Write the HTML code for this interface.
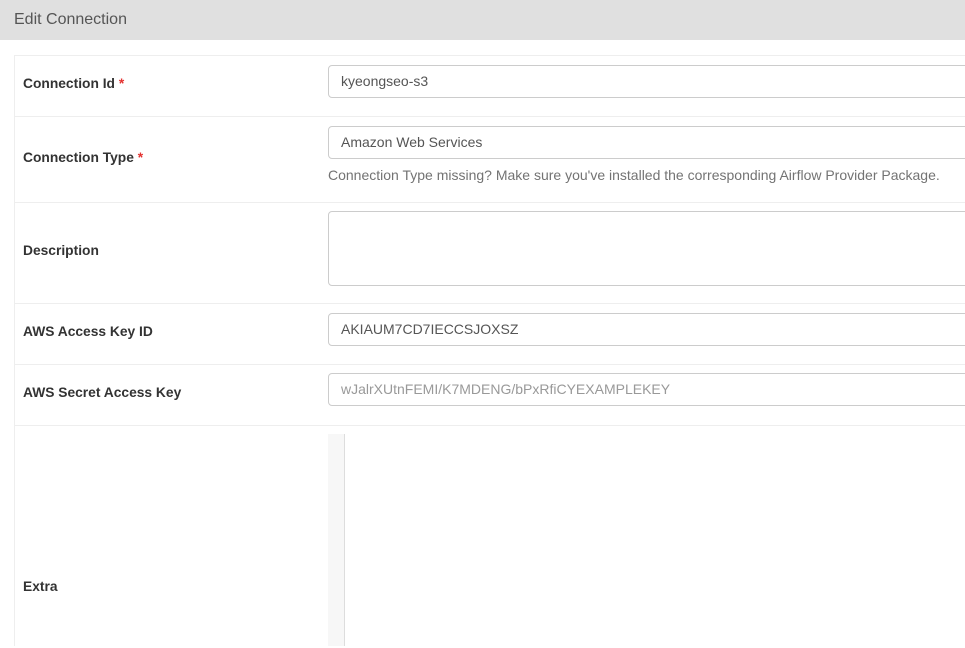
<!DOCTYPE html><html style="overflow:hidden;height:648px"><head><style>
body{margin:0;width:965px;height:648px;overflow:hidden;background:#fff;font-family:"Liberation Sans",sans-serif;color:#333}
.h{height:40px;background:#e0e0e0;font-size:16px;line-height:39px;padding-left:14px;color:#555}
.t{position:absolute;left:14px;top:55px;width:960px;border-left:1px solid #eee;border-top:1px solid #eee}
.r{position:relative;border-bottom:1px solid #eee}
.l{position:absolute;left:8px;font-weight:bold;font-size:13.8px;color:#333}
.l span{color:#e4312f}
.i{position:absolute;left:313px;width:660px;height:33px;border:1px solid #ccc;border-radius:4px;box-sizing:border-box;font-size:14px;line-height:31px;padding-left:12px;color:#555}
.hint{position:absolute;left:313px;top:50px;font-size:14px;color:#737373}
</style></head><body>
<div class="h">Edit Connection</div>
<div class="t">
<div class="r" style="height:60px"><div class="l" style="top:20px">Connection Id <span>*</span></div><div class="i" style="top:9px">kyeongseo-s3</div></div>
<div class="r" style="height:85px"><div class="l" style="top:33px">Connection Type <span>*</span></div><div class="i" style="top:9px">Amazon Web Services</div><div class="hint">Connection Type missing? Make sure you've installed the corresponding Airflow Provider Package.</div></div>
<div class="r" style="height:100px"><div class="l" style="top:40px">Description</div><div class="i" style="top:8px;height:75px"></div></div>
<div class="r" style="height:60px"><div class="l" style="top:20px">AWS Access Key ID</div><div class="i" style="top:9px">AKIAUM7CD7IECCSJOXSZ</div></div>
<div class="r" style="height:60px"><div class="l" style="top:20px">AWS Secret Access Key</div><div class="i" style="top:8px;color:#999">wJalrXUtnFEMI/K7MDENG/bPxRfiCYEXAMPLEKEY</div></div>
<div class="r" style="height:220px;border-bottom:none"><div class="l" style="top:153px">Extra</div><div style="position:absolute;left:313px;top:8px;width:16px;height:212px;background:#f7f7f7;border-right:1px solid #ddd"></div></div>
</div>
</body></html>
